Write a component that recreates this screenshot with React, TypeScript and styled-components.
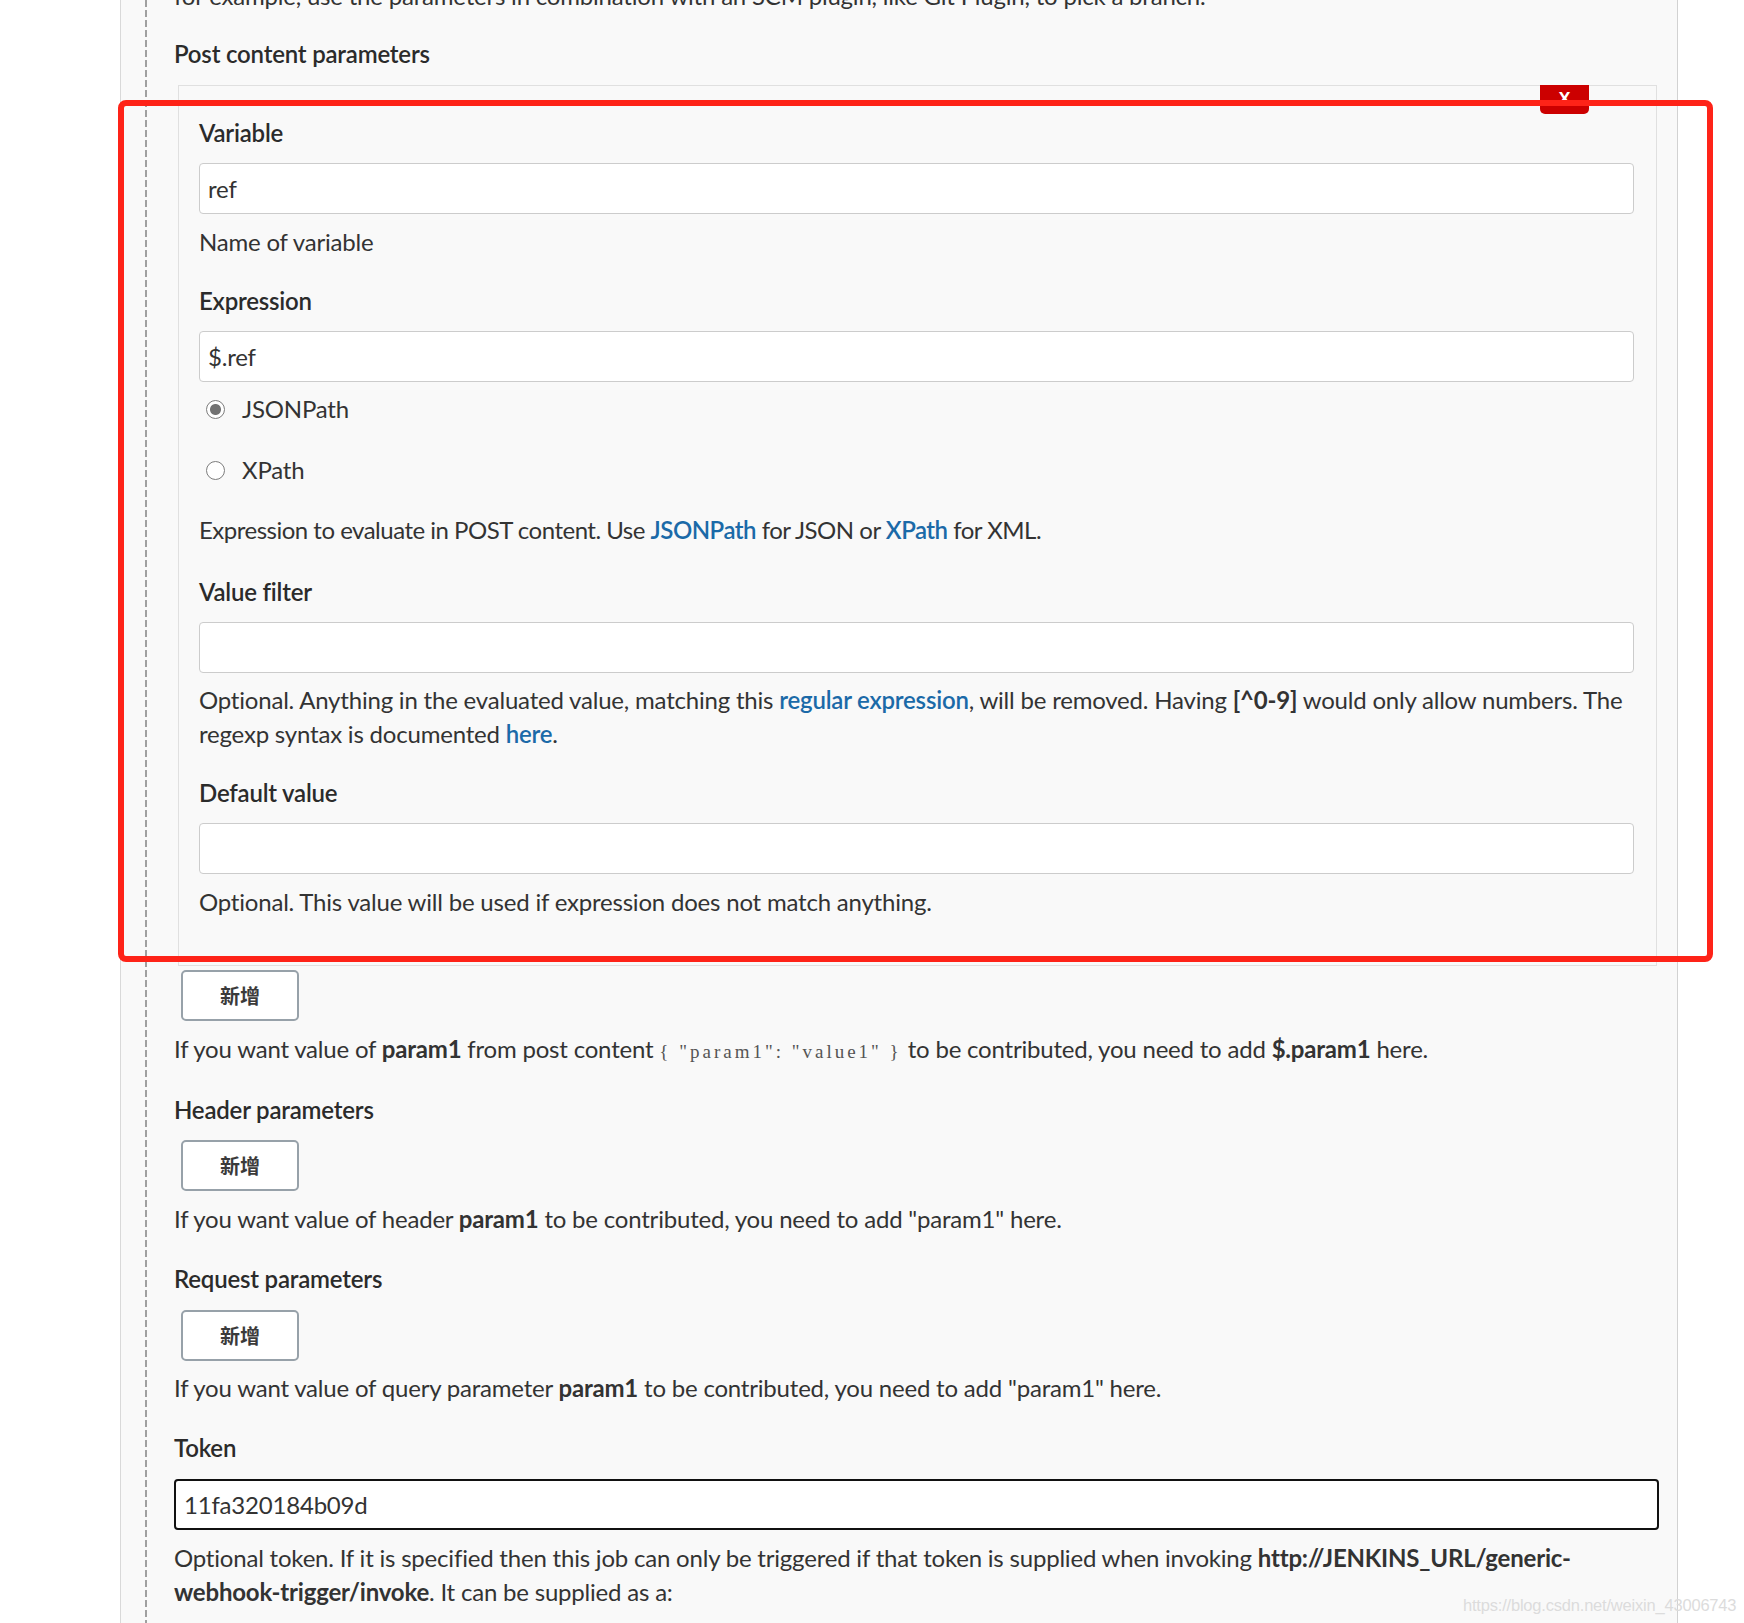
import React from 'react';
import styled, { createGlobalStyle } from 'styled-components';

const GlobalStyle = createGlobalStyle`
	html, body {
		margin: 0;
		padding: 0;
		overflow: hidden;
		background: #ffffff;
	}
	body {
		font-family: Lato, 'Noto Sans CJK SC', sans-serif;
		font-size: 24px;
		line-height: 34px;
		letter-spacing: -0.2px;
		color: #333333;
	}
	* {
		box-sizing: border-box;
	}
`;

const Page = styled.div`
	position: relative;
	width: 1744px;
	height: 1623px;
	overflow: hidden;
`;

const Panel = styled.div`
	margin-left: 120px;
	width: 1558px;
	min-height: 1700px;
	padding: 0 18px 0 24px;
	background: #f9f9f9;
	border-left: 1px solid #d9d9d9;
	border-right: 1px solid #d2d2d2;
`;

const Nested = styled.div`
	display: flex;
	flex-direction: column;
	min-height: 1700px;
	padding-left: 29px;
	background: linear-gradient(#a0a0a0 70%, transparent 0) 0 0 / 2px 10px repeat-y;
`;

const Text = styled.div<{ $mt?: number; $nowrap?: boolean; $ls?: number }>`
	margin-top: ${(p) => p.$mt ?? 0}px;
	white-space: ${(p) => (p.$nowrap ? 'nowrap' : 'normal')};
	${(p) => (p.$ls !== undefined ? `letter-spacing: ${p.$ls}px;` : '')}
`;

const Title = styled.div<{ $mt?: number }>`
	margin-top: ${(p) => p.$mt ?? 0}px;
	font-weight: 600;
	color: #2b2b2b;
`;

const Chunk = styled.div`
	position: relative;
	margin: 14px 2px 0 4px;
	padding: 30px 22px 46px 20px;
	border: 1px solid #e0e0e0;
`;

const DeleteButton = styled.button`
	position: absolute;
	top: -1px;
	right: 67px;
	width: 49px;
	height: 29px;
	padding: 0;
	border: none;
	border-radius: 0 0 5px 5px;
	background: #cc0000;
	color: #ffffff;
	font-family: 'Liberation Sans', Arial, sans-serif;
	font-weight: bold;
	font-size: 18px;
	line-height: 29px;
	text-align: center;
`;

const Field = styled.div<{ $mt?: number }>`
	margin-top: ${(p) => p.$mt ?? 0}px;
`;

const TextInput = styled.input<{ $focused?: boolean; $mt?: number }>`
	display: block;
	width: 100%;
	height: 51px;
	margin: ${(p) => p.$mt ?? 13}px 0 0;
	padding: 0 8px;
	font: inherit;
	letter-spacing: inherit;
	color: #333333;
	background: #ffffff;
	border: ${(p) => (p.$focused ? '2px solid #111111' : '1px solid #cccccc')};
	border-radius: 4px;
	outline: none;
`;

const RadioRow = styled.label<{ $mt: number }>`
	display: flex;
	align-items: center;
	gap: 17px;
	margin-top: ${(p) => p.$mt}px;
	padding-left: 7px;
`;

const Radio = styled.input`
	appearance: none;
	width: 19px;
	height: 19px;
	margin: 0;
	border: 1.5px solid #7d7d7d;
	border-radius: 50%;
	background: #ffffff;

	&:checked {
		background: radial-gradient(circle, #727272 0 5px, #ffffff 6px);
	}
`;

const Link = styled.a`
	color: #1b6aa8;
	font-weight: 600;
	text-decoration: none;
`;

const Code = styled.code`
	font-family: 'Liberation Serif', 'Times New Roman', serif;
	font-size: 19px;
	letter-spacing: 3px;
	color: #555555;
`;

const AddButton = styled.button<{ $mt: number }>`
	align-self: flex-start;
	width: 118px;
	height: 51px;
	margin: ${(p) => p.$mt}px 0 0 7px;
	padding: 0;
	background: #ffffff;
	border: 2px solid #97a1a9;
	border-radius: 5px;
	font-family: 'Noto Sans CJK SC', sans-serif;
	font-weight: bold;
	font-size: 20px;
	color: #3a3a3a;
`;

const Annotation = styled.div`
	position: absolute;
	left: 118px;
	top: 100px;
	width: 1595px;
	height: 862px;
	border: 6px solid #fe2318;
	border-radius: 8px;
	pointer-events: none;
	z-index: 5;
`;

const Watermark = styled.div`
	position: absolute;
	left: 1463px;
	top: 1596px;
	font-family: 'Liberation Sans', Arial, sans-serif;
	font-size: 16.5px;
	line-height: 18px;
	color: #dcdcdc;
	white-space: nowrap;
`;

const App: React.FC = () => {
	return (
		<>
			<GlobalStyle />
			<Page>
				<Panel>
					<Nested>
						<Text $mt={-21}>
							for example, use the parameters in combination with an SCM plugin, like Git Plugin, to pick a branch.
						</Text>
						<Title $mt={24}>Post content parameters</Title>

						<Chunk>
							<DeleteButton>X</DeleteButton>

							<Field>
								<Title>Variable</Title>
								<TextInput readOnly value="ref" />
								<Text $mt={11}>Name of variable</Text>
							</Field>

							<Field $mt={25}>
								<Title>Expression</Title>
								<TextInput readOnly value="$.ref" />
								<RadioRow $mt={10}>
									<Radio type="radio" name="exprType" defaultChecked />
									JSONPath
								</RadioRow>
								<RadioRow $mt={27}>
									<Radio type="radio" name="exprType" />
									XPath
								</RadioRow>
								<Text $mt={26} $ls={-0.5}>
									Expression to evaluate in POST content. Use <Link>JSONPath</Link> for JSON or{' '}
									<Link>XPath</Link> for XML.
								</Text>
							</Field>

							<Field $mt={28}>
								<Title>Value filter</Title>
								<TextInput readOnly value="" />
								<Text $mt={10} $nowrap>
									Optional. Anything in the evaluated value, matching this <Link>regular expression</Link>, will
									be removed. Having <b>[^0-9]</b> would only allow numbers. The
									<br />
									regexp syntax is documented <Link>here</Link>.
								</Text>
							</Field>

							<Field $mt={25}>
								<Title>Default value</Title>
								<TextInput readOnly value="" />
								<Text $mt={11}>Optional. This value will be used if expression does not match anything.</Text>
							</Field>
						</Chunk>

						<AddButton $mt={4}>新增</AddButton>
						<Text $mt={11}>
							If you want value of <b>param1</b> from post content <Code>{'{ "param1": "value1" }'}</Code> to be
							contributed, you need to add <b>$.param1</b> here.
						</Text>

						<Title $mt={24}>Header parameters</Title>
						<AddButton $mt={13}>新增</AddButton>
						<Text $mt={11}>
							If you want value of header <b>param1</b> to be contributed, you need to add "param1" here.
						</Text>

						<Title $mt={26}>Request parameters</Title>
						<AddButton $mt={14}>新增</AddButton>
						<Text $mt={10}>
							If you want value of query parameter <b>param1</b> to be contributed, you need to add "param1" here.
						</Text>

						<Title $mt={26}>Token</Title>
						<TextInput readOnly value="11fa320184b09d" $focused $mt={14} />
						<Text $mt={11} $nowrap>
							Optional token. If it is specified then this job can only be triggered if that token is supplied when
							invoking <b>http://JENKINS_URL/generic-</b>
							<br />
							<b>webhook-trigger/invoke</b>. It can be supplied as a:
						</Text>
					</Nested>
				</Panel>
				<Annotation />
				<Watermark>https://blog.csdn.net/weixin_43006743</Watermark>
			</Page>
		</>
	);
};

export default App;
